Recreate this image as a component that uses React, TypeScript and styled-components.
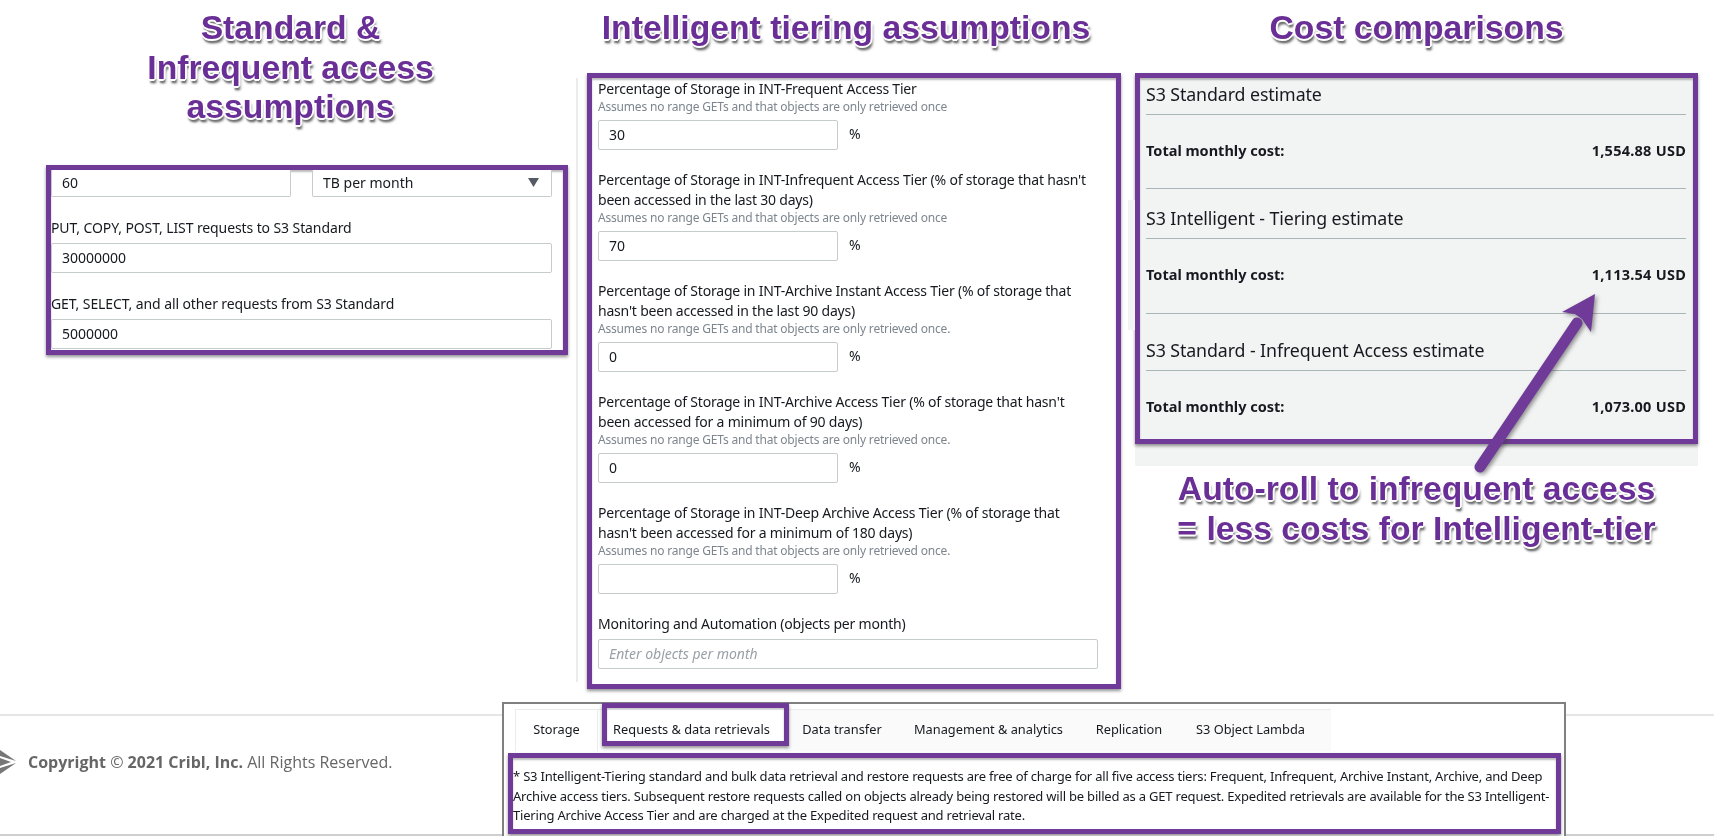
import React from "react";
import styled, { createGlobalStyle } from "styled-components";

const PURPLE = "#6f3a98";
const UI_FONT = `"Noto Sans", "Open Sans", sans-serif`;

const Global = createGlobalStyle`
  html, body { margin: 0; padding: 0; background: #fff; }
  body { font-family: ${UI_FONT}; color: #16191f; }
`;

const Page = styled.div`
  position: relative;
  width: 1714px;
  height: 836px;
  overflow: hidden;
  background: #fff;
  filter: blur(0.35px);
`;

const Columns = styled.div`
  display: flex;
  height: 702px;
`;

const Column = styled.section<{ $width: number; $gap?: number }>`
  flex: 0 0 ${(p) => p.$width}px;
  margin-right: ${(p) => p.$gap ?? 0}px;
  display: flex;
  flex-direction: column;
`;

const Heading = styled.h2<{ $height: number; $offset?: number }>`
  margin: 0;
  height: ${(p) => p.$height}px;
  padding: 8px 0 0 ${(p) => p.$offset ?? 0}px;
  box-sizing: border-box;
  text-align: center;
  white-space: nowrap;
  font: bold 33.7px/39.5px "Liberation Sans", Arial, sans-serif;
  color: #6a2f96;
  text-shadow:
    -1px -1px 1px #fff, 1px -1px 1px #fff, -1px 1px 0 #fff, 1px 1px 0 #fff,
    -2px 0 1px #fff, 2px 0 1px #fff, 0 -2px 1px #fff, 0 2px 0 #fff,
    1px 4px 2px #6e6e70, 2px 4px 3px #999;
`;

const Callout = styled(Heading)`
  height: auto;
  padding: 0;
  margin-top: 3px;
`;

const Frame = styled.div<{ $left?: number; $width: number; $height: number }>`
  box-sizing: border-box;
  margin-left: ${(p) => p.$left ?? 0}px;
  width: ${(p) => p.$width}px;
  height: ${(p) => p.$height}px;
  border: 5px solid ${PURPLE};
  box-shadow: 0 2px 3px rgba(60, 60, 60, 0.55), inset 0 2px 2px rgba(60, 60, 60, 0.35);
`;

const RowPair = styled.div`
  display: flex;
  gap: 21px;
`;

const Field = styled.div<{ $w?: number; $clipped?: boolean }>`
  box-sizing: border-box;
  flex: ${(p) => (p.$w ? `0 0 ${p.$w}px` : "1 1 auto")};
  width: ${(p) => (p.$w ? `${p.$w}px` : "auto")};
  height: ${(p) => (p.$clipped ? 27 : 30)}px;
  display: flex;
  align-items: center;
  justify-content: space-between;
  padding: ${(p) => (p.$clipped ? "0 12px 2px 10px" : "0 10px 2px")};
  background: #fff;
  border: 1px solid #c6cccc;
  border-top-color: ${(p) => (p.$clipped ? "transparent" : "#c6cccc")};
  border-radius: 2px;
  font-size: 14px;
  color: #16191f;
`;

const WideField = styled(Field)`
  width: 500px;
`;

const Placeholder = styled.span`
  font-style: italic;
  color: #99a0a6;
`;

const Caret = styled.svg`
  width: 11px;
  height: 9px;
  fill: #545b64;
`;

const SimpleForm = styled.div`
  padding: 0 11px 0 0;
`;

const FieldLabel = styled.div<{ $top: number }>`
  margin-top: ${(p) => p.$top}px;
  margin-bottom: 5px;
  font-size: 14px;
  line-height: 20px;
  letter-spacing: -0.1px;
  color: #16191f;
`;

const TierForm = styled.div`
  padding: 1px 0 0 6px;
`;

const TierGroup = styled.div`
  margin-bottom: 20px;
  width: 492px;
`;

const TierLabel = styled.div`
  font-size: 14px;
  line-height: 20px;
  letter-spacing: -0.2px;
  color: #16191f;
`;

const Hint = styled.div`
  font-size: 12px;
  line-height: 16px;
  letter-spacing: -0.19px;
  color: #7d868e;
  margin-bottom: 5px;
`;

const UnitRow = styled.div`
  display: flex;
  align-items: center;
  gap: 11px;
  font-size: 14px;
`;

const Unit = styled.span`
  padding-bottom: 3px;
`;

const MonitorLabel = styled(TierLabel)`
  margin-bottom: 5px;
`;

const GreyPanel = styled.div`
  width: 563px;
  height: 393px;
  background: #f2f3f3;
`;

const CostFrame = styled(Frame)`
  padding: 0 7px 0 6px;
`;

const Estimate = styled.div<{ $top: number }>`
  padding-top: ${(p) => p.$top}px;
`;

const EstimateTitle = styled.div`
  box-sizing: border-box;
  height: 37px;
  font-size: 17.8px;
  line-height: 32px;
  letter-spacing: -0.1px;
  color: #16191f;
  border-bottom: 1px solid #aab7b8;
`;

const CostRow = styled.div<{ $h: number; $pad: number; $rule?: boolean }>`
  box-sizing: border-box;
  height: ${(p) => p.$h}px;
  padding-bottom: ${(p) => p.$pad}px;
  display: flex;
  align-items: center;
  justify-content: space-between;
  font-size: 14.5px;
  font-weight: 700;
  color: #16191f;
  border-bottom: ${(p) => (p.$rule ? "1px solid #aab7b8" : "0")};
`;

const CostValue = styled.span`
  letter-spacing: 0.25px;
`;

const Arrow = styled.svg`
  position: absolute;
  left: 1460px;
  top: 285px;
  width: 160px;
  height: 195px;
  overflow: visible;
  filter: drop-shadow(2px 2px 2px rgba(60, 60, 60, 0.55));
`;

const Gutter = styled.div`
  position: absolute;
  left: 576px;
  top: 78px;
  width: 2px;
  height: 604px;
  background: #ebeded;
`;

const SideStrip = styled.div`
  position: absolute;
  left: 1128px;
  top: 200px;
  width: 7px;
  height: 130px;
  background: #f2f3f3;
`;

const Footer = styled.footer`
  position: relative;
  height: 134px;
  display: flex;
  align-items: flex-start;
`;

const FooterRule = styled.div`
  position: absolute;
  left: 0;
  right: 0;
  top: 12px;
  height: 2px;
  background: #e6e6e6;
`;

const BottomRule = styled.div`
  position: absolute;
  left: 0;
  right: 0;
  bottom: 0;
  height: 2px;
  background: #cfcfcf;
`;

const Legal = styled.div`
  flex: 0 0 502px;
  height: 96px;
  margin-top: 12px;
  display: flex;
  align-items: center;
  gap: 12px;
  box-sizing: border-box;
  font-family: "Open Sans", sans-serif;
  font-size: 16px;
  color: #666;
`;

const Logo = styled.svg`
  flex: 0 0 16px;
  width: 16px;
  height: 24px;
`;

const Strong = styled.b`
  font-weight: 700;
`;

const Card = styled.div`
  position: relative;
  box-sizing: border-box;
  width: 1064px;
  height: 134px;
  background: #fff;
  border: 2px solid #808080;
  border-bottom: 0;
  padding: 5px 4px 0 2px;
`;

const TabBar = styled.div`
  display: flex;
  align-items: stretch;
  width: 816px;
  height: 42px;
  margin-left: 9px;
  background: #fafafa;
  border-top: 1px solid #eaeded;
  box-sizing: border-box;
  font-size: 12.8px;
  color: #16191f;
`;

const Tab = styled.div<{ $w: number; $boxed?: boolean; $active?: boolean }>`
  flex: 0 0 ${(p) => p.$w}px;
  box-sizing: border-box;
  display: flex;
  align-items: center;
  justify-content: center;
  white-space: nowrap;
  background: ${(p) => (p.$active ? "#fff" : "transparent")};
  border-left: ${(p) => (p.$boxed ? "1px solid #eaeded" : "0")};
  border-right: ${(p) => (p.$boxed ? "1px solid #eaeded" : "0")};
  padding-bottom: 3px;
`;

const TabHighlight = styled.div`
  position: absolute;
  left: 98px;
  top: -1px;
  width: 187px;
  height: 43px;
  box-sizing: border-box;
  border: 5px solid ${PURPLE};
  box-shadow: 0 2px 3px rgba(60, 60, 60, 0.55), inset 0 1px 2px rgba(60, 60, 60, 0.35);
`;

const NoteFrame = styled(Frame)`
  margin-top: 2px;
  padding: 9px 0 0 0;
  font-size: 13px;
  letter-spacing: -0.2px;
  line-height: 19.5px;
  color: #16191f;
  white-space: nowrap;
  background: #fff;
  position: relative;
`;

const tiers = [
  {
    label: "Percentage of Storage in INT-Frequent Access Tier",
    hint: "Assumes no range GETs and that objects are only retrieved once",
    value: "30",
  },
  {
    label: "Percentage of Storage in INT-Infrequent Access Tier (% of storage that hasn't been accessed in the last 30 days)",
    hint: "Assumes no range GETs and that objects are only retrieved once",
    value: "70",
  },
  {
    label: "Percentage of Storage in INT-Archive Instant Access Tier (% of storage that hasn't been accessed in the last 90 days)",
    hint: "Assumes no range GETs and that objects are only retrieved once.",
    value: "0",
  },
  {
    label: "Percentage of Storage in INT-Archive Access Tier (% of storage that hasn't been accessed for a minimum of 90 days)",
    hint: "Assumes no range GETs and that objects are only retrieved once.",
    value: "0",
  },
  {
    label: "Percentage of Storage in INT-Deep Archive Access Tier (% of storage that hasn't been accessed for a minimum of 180 days)",
    hint: "Assumes no range GETs and that objects are only retrieved once.",
    value: "",
  },
];

const estimates = [
  { title: "S3 Standard estimate", cost: "1,554.88 USD", top: 0, rowH: 74, pad: 4, rule: true },
  { title: "S3 Intelligent - Tiering estimate", cost: "1,113.54 USD", top: 13, rowH: 75, pad: 4, rule: true },
  { title: "S3 Standard - Infrequent Access estimate", cost: "1,073.00 USD", top: 20, rowH: 70, pad: 0, rule: false },
];

const tabs = [
  { label: "Storage", w: 83, boxed: true, active: true },
  { label: "Requests & data retrievals", w: 187, boxed: false, active: true },
  { label: "Data transfer", w: 114 },
  { label: "Management & analytics", w: 179 },
  { label: "Replication", w: 102 },
  { label: "S3 Object Lambda", w: 141 },
];

export default function App() {
  return (
    <Page>
      <Global />
      <Gutter />
      <SideStrip />
      <Columns>
        <Column $width={570}>
          <Heading $height={165} $offset={11}>
            Standard &amp;
            <br />
            Infrequent access
            <br />
            assumptions
          </Heading>
          <Frame $left={46} $width={522} $height={190}>
            <SimpleForm>
              <RowPair>
                <Field $w={240} $clipped>60</Field>
                <Field $w={240} $clipped>
                  TB per month
                  <Caret viewBox="0 0 11 9"><path d="M0 0h11L5.5 9z" /></Caret>
                </Field>
              </RowPair>
              <FieldLabel $top={21}>PUT, COPY, POST, LIST requests to S3 Standard</FieldLabel>
              <Field>30000000</Field>
              <FieldLabel $top={21}>GET, SELECT, and all other requests from S3 Standard</FieldLabel>
              <Field>5000000</Field>
            </SimpleForm>
          </Frame>
        </Column>

        <Column $width={552} $gap={13}>
          <Heading $height={73}>Intelligent tiering assumptions</Heading>
          <Frame $left={17} $width={534} $height={616}>
            <TierForm>
              {tiers.map((t) => (
                <TierGroup key={t.label}>
                  <TierLabel>{t.label}</TierLabel>
                  <Hint>{t.hint}</Hint>
                  <UnitRow>
                    <Field $w={240}>{t.value}</Field>
                    <Unit>%</Unit>
                  </UnitRow>
                </TierGroup>
              ))}
              <MonitorLabel>Monitoring and Automation (objects per month)</MonitorLabel>
              <WideField>
                <Placeholder>Enter objects per month</Placeholder>
              </WideField>
            </TierForm>
          </Frame>
        </Column>

        <Column $width={563}>
          <Heading $height={73}>Cost comparisons</Heading>
          <GreyPanel>
            <CostFrame $width={563} $height={371}>
              {estimates.map((e) => (
                <Estimate key={e.title} $top={e.top}>
                  <EstimateTitle>{e.title}</EstimateTitle>
                  <CostRow $h={e.rowH} $pad={e.pad} $rule={e.rule}>
                    <span>Total monthly cost:</span>
                    <CostValue>{e.cost}</CostValue>
                  </CostRow>
                </Estimate>
              ))}
            </CostFrame>
          </GreyPanel>
          <Callout as="div" $height={0}>
            Auto-roll to infrequent access
            <br />= less costs for Intelligent-tier
          </Callout>
        </Column>
      </Columns>

      <Footer>
        <FooterRule />
        <BottomRule />
        <Legal>
          <Logo viewBox="0 0 16 24" fill="#777">
            <path d="M0 0 16 11 0 6z" />
            <path d="M0 24 16 13 0 18z" />
            <path d="M0 8 11 12 0 16z" />
          </Logo>
          <span>
            <Strong>Copyright</Strong> © <Strong>2021 Cribl, Inc.</Strong> All Rights Reserved.
          </span>
        </Legal>
        <Card>
          <TabBar>
            {tabs.map((t) => (
              <Tab key={t.label} $w={t.w} $boxed={t.boxed} $active={t.active}>
                {t.label}
              </Tab>
            ))}
          </TabBar>
          <TabHighlight />
          <NoteFrame $left={2} $width={1053} $height={81}>
            * S3 Intelligent-Tiering standard and bulk data retrieval and restore requests are free of charge for all five access tiers: Frequent, Infrequent, Archive Instant, Archive, and Deep
            <br />
            Archive access tiers. Subsequent restore requests called on objects already being restored will be billed as a GET request. Expedited retrievals are available for the S3 Intelligent-
            <br />
            Tiering Archive Access Tier and are charged at the Expedited request and retrieval rate.
          </NoteFrame>
        </Card>
      </Footer>

      <Arrow viewBox="0 0 160 195">
        <path d="M20 182 117 38" stroke={PURPLE} strokeWidth="11" strokeLinecap="round" fill="none" />
        <path d="M135 9 102 27 115 29 122 34 131 47z" fill={PURPLE} />
      </Arrow>
    </Page>
  );
}
